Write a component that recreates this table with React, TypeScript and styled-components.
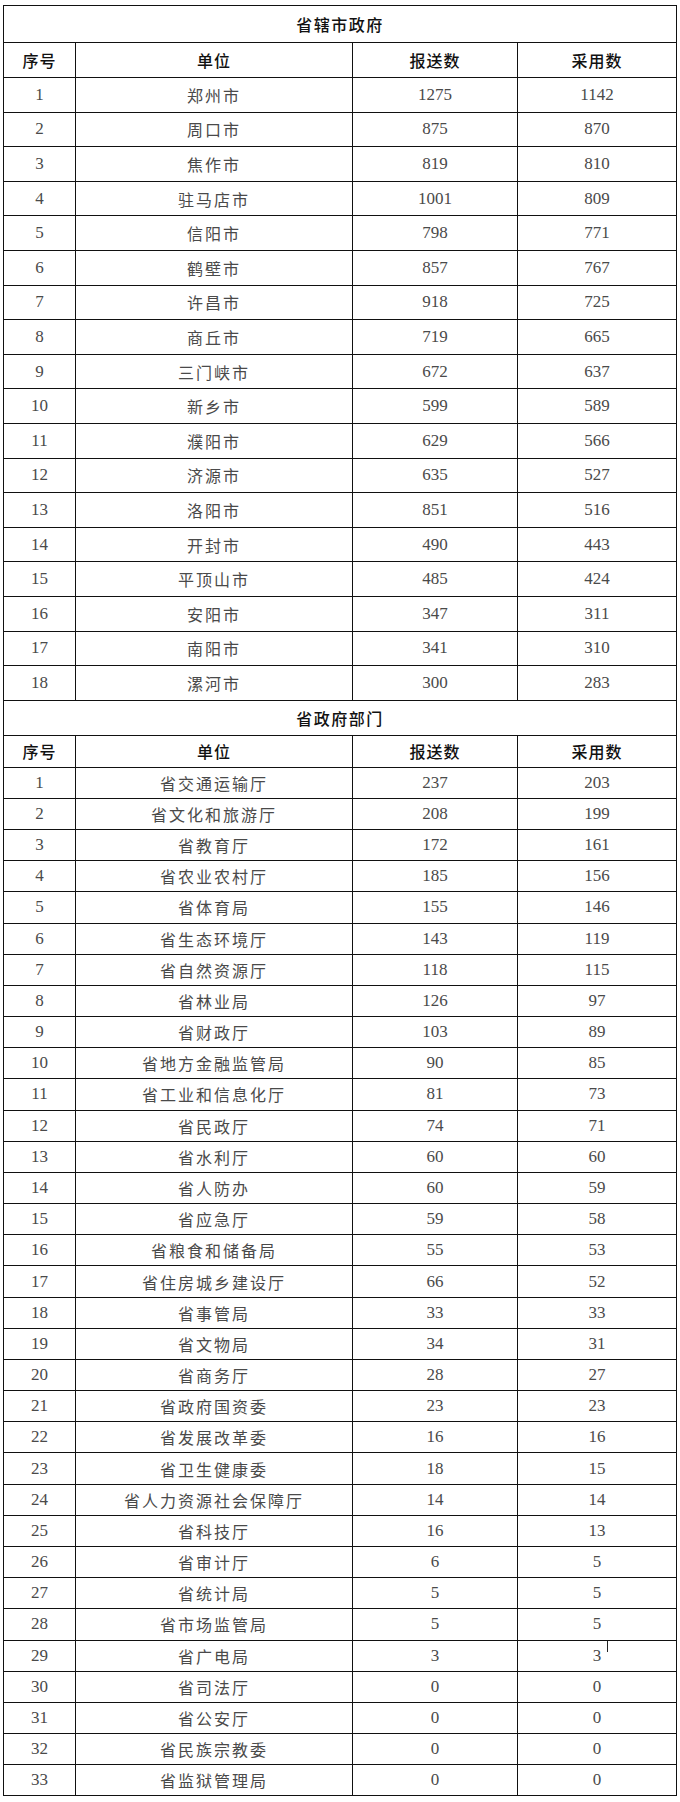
import * as React from 'react';
import styled, { createGlobalStyle } from 'styled-components';

const GlobalStyle = createGlobalStyle`
  html, body {
    margin: 0;
    padding: 0;
    background: #ffffff;
  }
`;

const Page = styled.div`
  width: 680px;
  padding: 5px 0 6px 3px;
  box-sizing: border-box;
`;

const Sheet = styled.table`
  width: 673px;
  border-collapse: collapse;
  table-layout: fixed;
  border: 1px solid #111;
`;

const Row = styled.tr<{ $h: number }>`
  height: ${({ $h }) => $h}px;
`;

const SectionTitle = styled.td`
  border: 1px solid #111;
  padding: 0;
  text-align: center;
  vertical-align: middle;
  font-family: "Noto Sans CJK SC", sans-serif;
  font-size: 16px;
  font-weight: 500;
  letter-spacing: 1.5px;
  color: #111;
`;

const HeadCell = styled.th`
  border: 1px solid #111;
  padding: 0;
  text-align: center;
  vertical-align: middle;
  font-family: "Noto Sans CJK SC", sans-serif;
  font-size: 16px;
  font-weight: 500;
  letter-spacing: 1px;
  color: #111;
`;

const Cell = styled.td<{ $wide?: boolean }>`
  position: relative;
  border: 1px solid #111;
  padding: 0;
  text-align: center;
  vertical-align: middle;
  font-family: "Liberation Serif", "Noto Sans CJK SC", serif;
  font-size: ${({ $wide }) => ($wide ? 16 : 17)}px;
  font-weight: 400;
  letter-spacing: ${({ $wide }) => ($wide ? 2 : 0)}px;
  color: #4a4a4a;
`;

const Caret = styled.span`
  position: absolute;
  left: 89px;
  top: 0;
  width: 1px;
  height: 11px;
  background: #222;
`;

type Entry = [string, number, number];

const cities: Entry[] = [
  ['郑州市', 1275, 1142],
  ['周口市', 875, 870],
  ['焦作市', 819, 810],
  ['驻马店市', 1001, 809],
  ['信阳市', 798, 771],
  ['鹤壁市', 857, 767],
  ['许昌市', 918, 725],
  ['商丘市', 719, 665],
  ['三门峡市', 672, 637],
  ['新乡市', 599, 589],
  ['濮阳市', 629, 566],
  ['济源市', 635, 527],
  ['洛阳市', 851, 516],
  ['开封市', 490, 443],
  ['平顶山市', 485, 424],
  ['安阳市', 347, 311],
  ['南阳市', 341, 310],
  ['漯河市', 300, 283],
];

const departments: Entry[] = [
  ['省交通运输厅', 237, 203],
  ['省文化和旅游厅', 208, 199],
  ['省教育厅', 172, 161],
  ['省农业农村厅', 185, 156],
  ['省体育局', 155, 146],
  ['省生态环境厅', 143, 119],
  ['省自然资源厅', 118, 115],
  ['省林业局', 126, 97],
  ['省财政厅', 103, 89],
  ['省地方金融监管局', 90, 85],
  ['省工业和信息化厅', 81, 73],
  ['省民政厅', 74, 71],
  ['省水利厅', 60, 60],
  ['省人防办', 60, 59],
  ['省应急厅', 59, 58],
  ['省粮食和储备局', 55, 53],
  ['省住房城乡建设厅', 66, 52],
  ['省事管局', 33, 33],
  ['省文物局', 34, 31],
  ['省商务厅', 28, 27],
  ['省政府国资委', 23, 23],
  ['省发展改革委', 16, 16],
  ['省卫生健康委', 18, 15],
  ['省人力资源社会保障厅', 14, 14],
  ['省科技厅', 16, 13],
  ['省审计厅', 6, 5],
  ['省统计局', 5, 5],
  ['省市场监管局', 5, 5],
  ['省广电局', 3, 3],
  ['省司法厅', 0, 0],
  ['省公安厅', 0, 0],
  ['省民族宗教委', 0, 0],
  ['省监狱管理局', 0, 0],
];

type SectionProps = {
  title: string,
  items: Entry[],
  titleH: number,
  headH: number,
  rowH: number,
};

const Section = ({ title, items, titleH, headH, rowH }: SectionProps) => (
  <>
    <Row $h={titleH}>
      <SectionTitle colSpan={4}>{title}</SectionTitle>
    </Row>
    <Row $h={headH}>
      <HeadCell>序号</HeadCell>
      <HeadCell>单位</HeadCell>
      <HeadCell>报送数</HeadCell>
      <HeadCell>采用数</HeadCell>
    </Row>
    {items.map(([name, sent, used], i) => (
      <Row $h={rowH} key={name}>
        <Cell>{i + 1}</Cell>
        <Cell $wide>{name}</Cell>
        <Cell>{sent}</Cell>
        <Cell>
          {used}
          {name === '省广电局' && <Caret />}
        </Cell>
      </Row>
    ))}
  </>
);

const App = () => (
  <Page>
    <GlobalStyle />
    <Sheet>
      <colgroup>
        <col style={{ width: 72 }} />
        <col style={{ width: 277 }} />
        <col style={{ width: 165 }} />
        <col style={{ width: 159 }} />
      </colgroup>
      <tbody>
        <Section title="省辖市政府" items={cities} titleH={37} headH={35} rowH={34.6} />
        <Section title="省政府部门" items={departments} titleH={35} headH={32} rowH={31.18} />
      </tbody>
    </Sheet>
  </Page>
);

export default App;
